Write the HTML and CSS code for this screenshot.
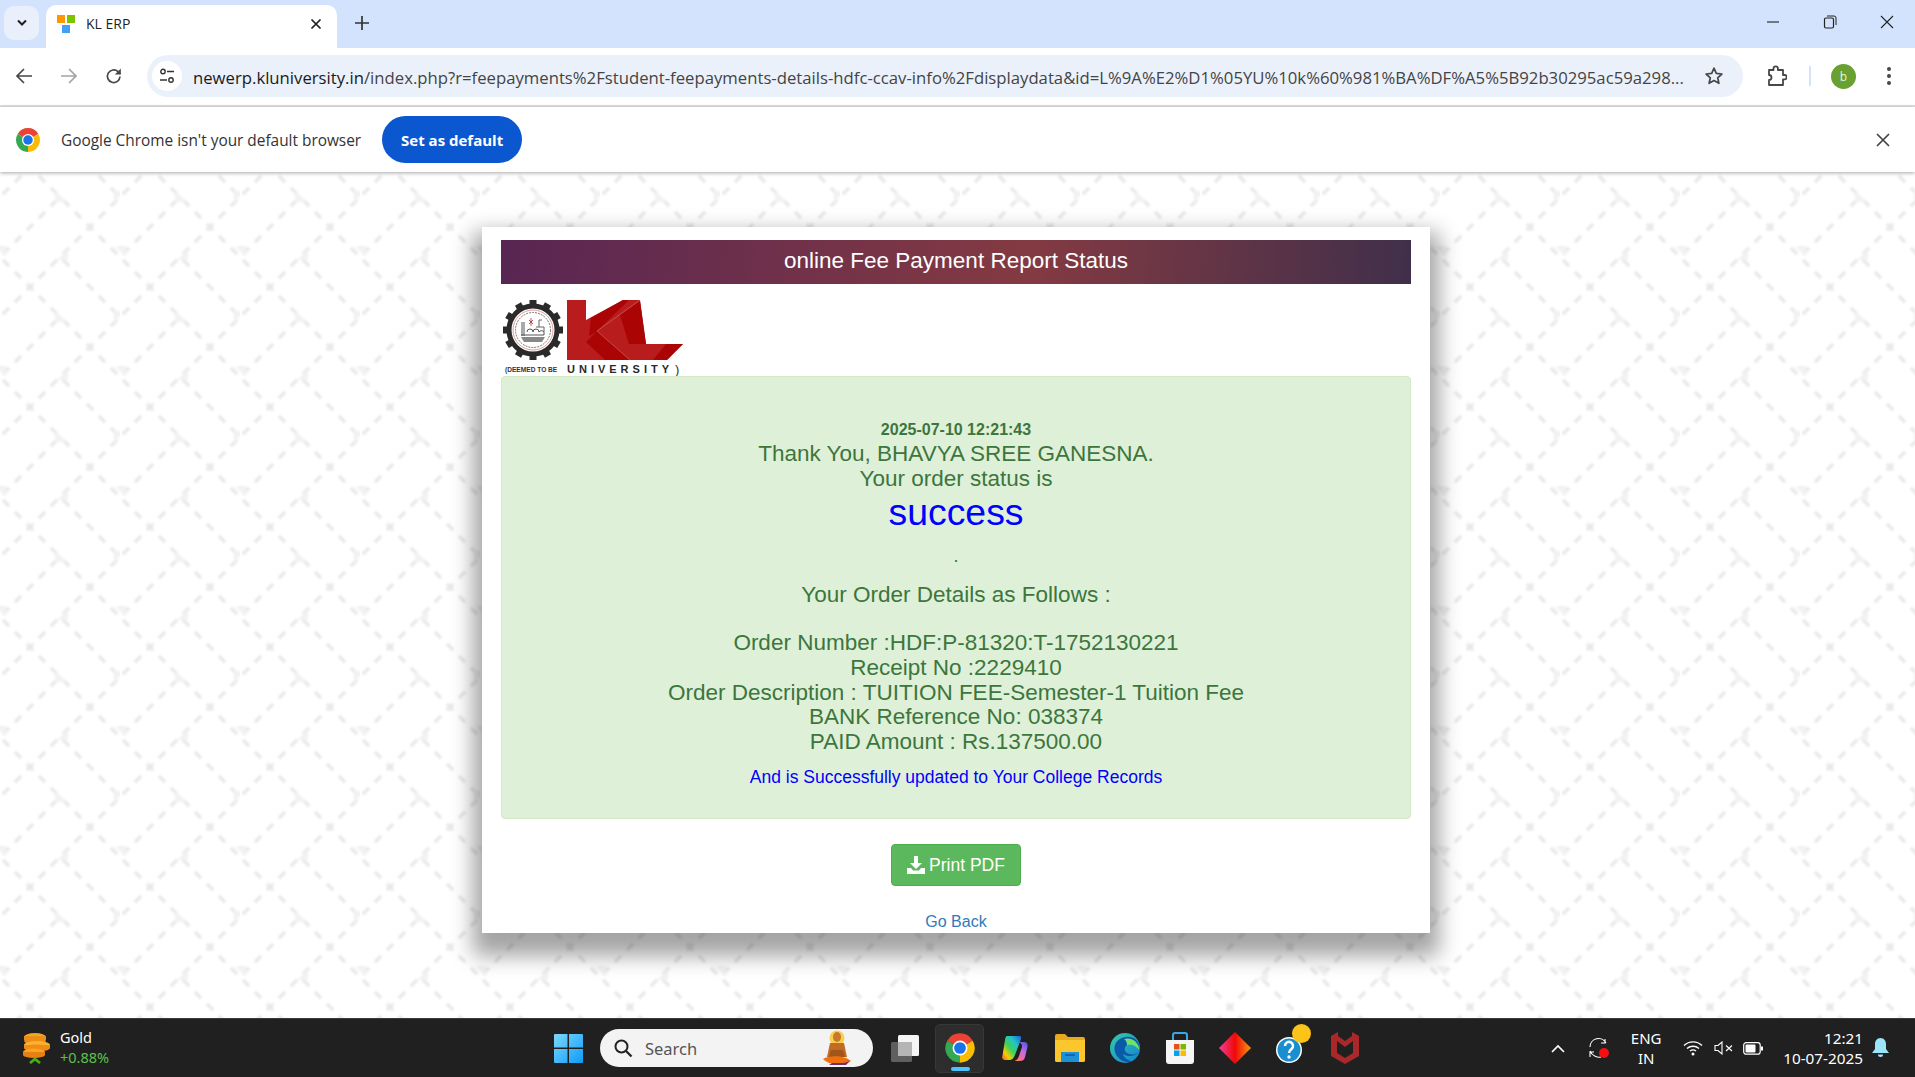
FILE: index.html
```html
<!DOCTYPE html>
<html lang="en">
<head>
<meta charset="utf-8">
<title>KL ERP</title>
<link rel="stylesheet" href="styles.css">
</head>
<body>
<svg class="defs" width="0" height="0" aria-hidden="true">
  <symbol id="chrome" viewBox="0 0 24 24">
    <path fill="#ea4335" d="M2.47 6.5A11 11 0 0 1 21.53 6.5L12 12Z"/>
    <path fill="#fbbc04" d="M21.53 6.5A11 11 0 0 1 12 23L12 12Z"/>
    <path fill="#34a853" d="M12 23A11 11 0 0 1 2.47 6.5L12 12Z"/>
    <circle cx="12" cy="12" r="5.6" fill="#fff"/>
    <circle cx="12" cy="12" r="4.4" fill="#1a73e8"/>
  </symbol>
</svg>

<header class="tabbar">
  <button class="tabs-menu"><svg width="12" height="8" viewBox="0 0 12 8"><path d="M2 1.5l4 4 4-4" fill="none" stroke="#1f1f1f" stroke-width="2"/></svg></button>
  <div class="tab">
    <svg class="favicon" width="18" height="18" viewBox="0 0 18 18"><rect x="0" y="0" width="8" height="8" fill="#ff9800"/><rect x="10" y="0" width="8" height="8" fill="#7cc400"/><rect x="5" y="10" width="8" height="8" fill="#42a0f5"/></svg>
    <span class="tab-title">KL ERP</span>
    <svg class="tab-close" width="12" height="12" viewBox="0 0 12 12"><path d="M1.5 1.5l9 9M10.5 1.5l-9 9" stroke="#1f1f1f" stroke-width="1.7"/></svg>
  </div>
  <svg class="new-tab" width="14" height="14" viewBox="0 0 14 14"><path d="M7 0v14M0 7h14" stroke="#333" stroke-width="1.7"/></svg>
  <div class="window-controls">
    <svg width="14" height="14" viewBox="0 0 14 14"><path d="M1 7h12" stroke="#222" stroke-width="1.1"/></svg>
    <svg width="14" height="14" viewBox="0 0 14 14"><rect x="1.5" y="3" width="9" height="10" rx="1.5" fill="none" stroke="#222" stroke-width="1.2"/><path d="M4 1h7a2 2 0 0 1 2 2v7" fill="none" stroke="#222" stroke-width="1"/></svg>
    <svg width="14" height="14" viewBox="0 0 14 14"><path d="M1 1l12 12M13 1L1 13" stroke="#222" stroke-width="1.1"/></svg>
  </div>
</header>

<nav class="toolbar">
  <div class="nav-icons">
    <svg width="18" height="18" viewBox="0 0 18 18"><path d="M17 9H2M9 2L2 9l7 7" fill="none" stroke="#474747" stroke-width="1.7"/></svg>
    <svg width="18" height="18" viewBox="0 0 18 18"><path d="M1 9h15M9 2l7 7-7 7" fill="none" stroke="#a3a3a3" stroke-width="1.7"/></svg>
    <svg width="18" height="18" viewBox="0 0 18 18"><path d="M15 9.500A6.300 6.300 0 1 1 13 4.600L15.500 7" fill="none" stroke="#474747" stroke-width="1.7"/><path d="M15.800 1.500v6h-6z" fill="#474747"/></svg>
  </div>
  <div class="omnibox">
    <span class="tune"><svg width="16" height="16" viewBox="0 0 16 16"><circle cx="4" cy="3.500" r="2.200" fill="none" stroke="#333" stroke-width="1.400"/><path d="M8 3.500h7M1 12h7" stroke="#333" stroke-width="1.400"/><circle cx="12" cy="12" r="2.200" fill="none" stroke="#333" stroke-width="1.400"/></svg></span>
    <span class="url"><span class="domain">newerp.kluniversity.in</span>/index.php?r=feepayments%2Fstudent-feepayments-details-hdfc-ccav-info%2Fdisplaydata&amp;id=L%9A%E2%D1%05YU%10k%60%981%BA%DF%A5%5B92b30295ac59a298...</span>
    <svg class="star" width="20" height="20" viewBox="0 0 20 20"><path d="M10 2.200l2.300 5.200 5.600.6-4.200 3.800 1.200 5.500L10 14.500l-4.900 2.800 1.200-5.500L2.100 8l5.600-.6z" fill="none" stroke="#474747" stroke-width="1.700" stroke-linejoin="round"/></svg>
  </div>
  <div class="tool-icons">
    <svg width="20" height="22" viewBox="0 0 20 22"><path d="M2 5h4.500V3.500a2.200 2.200 0 0 1 4.400 0V5H16v5h1.500a2.200 2.200 0 0 1 0 4.400H16V20H2v-5a2.300 2.300 0 0 0 0-5z" fill="none" stroke="#474747" stroke-width="1.800" stroke-linejoin="round"/></svg>
    <span class="divider"></span>
    <span class="avatar">b</span>
    <svg width="6" height="20" viewBox="0 0 6 20"><circle cx="3" cy="3" r="2" fill="#474747"/><circle cx="3" cy="10" r="2" fill="#474747"/><circle cx="3" cy="17" r="2" fill="#474747"/></svg>
  </div>
</nav>

<section class="infobar">
  <svg class="info-logo" width="26" height="26"><use href="#chrome"/></svg>
  <span class="info-text">Google Chrome isn't your default browser</span>
  <button class="default-btn">Set as default</button>
  <svg class="info-close" width="14" height="14" viewBox="0 0 14 14"><path d="M1 1l12 12M13 1L1 13" stroke="#444" stroke-width="1.700"/></svg>
</section>

<main class="page">
  <article class="card">
    <h1 class="banner">online Fee Payment Report Status</h1>
    <svg class="logo" width="182" height="78" viewBox="0 0 182 78">
      <g transform="translate(32 32)">
        <circle r="24" fill="none" stroke="#2a2a2a" stroke-width="5"/>
        <g fill="#2a2a2a">
          <rect x="-3.500" y="-30" width="7" height="6"/><rect x="-3.500" y="-30" width="7" height="6" transform="rotate(30)"/><rect x="-3.500" y="-30" width="7" height="6" transform="rotate(60)"/><rect x="-3.500" y="-30" width="7" height="6" transform="rotate(90)"/><rect x="-3.500" y="-30" width="7" height="6" transform="rotate(120)"/><rect x="-3.500" y="-30" width="7" height="6" transform="rotate(150)"/><rect x="-3.500" y="-30" width="7" height="6" transform="rotate(180)"/><rect x="-3.500" y="-30" width="7" height="6" transform="rotate(210)"/><rect x="-3.500" y="-30" width="7" height="6" transform="rotate(240)"/><rect x="-3.500" y="-30" width="7" height="6" transform="rotate(270)"/><rect x="-3.500" y="-30" width="7" height="6" transform="rotate(300)"/><rect x="-3.500" y="-30" width="7" height="6" transform="rotate(330)"/>
        </g>
        <circle r="20" fill="none" stroke="#e3a0a0" stroke-width="1"/>
        <circle r="17.500" fill="none" stroke="#666" stroke-width=".9" stroke-dasharray="2 1"/>
        <path d="M-11 -8v14M-9 -8v14M-6 2a3 3 0 0 1 6 0M0 2a3 3 0 0 1 6 0M6 2a3 3 0 0 1 5 0v3H-12" fill="none" stroke="#555" stroke-width="1"/>
        <path d="M-12 7h24l-3 5h-18z" fill="#888"/>
        <path d="M-4 -10l4 4M0 -10l-4 4M-2 -12v8" stroke="#a33" stroke-width=".8"/>
        <path d="M3 -3h8v5M6 -3v-7h3" fill="none" stroke="#666" stroke-width="1"/>
      </g>
      <path fill="#b81c1c" d="M66 2H85V22L122 2H139L145 46H182L166 62H66Z"/>
      <path fill="#ab0404" d="M90 20L122 2H128L96 33L88 38Z"/>
      <path fill="#ab0404" d="M96 33L129 62H104L85 44Z"/>
      <path fill="#ab0404" d="M119 17L139 3L145 46H128Z"/>
      <path fill="#ab0404" d="M165 46H182L166 62H152Z"/>
      <path d="M129 62L96 33L139 2" fill="none" stroke="#e0a0a0" stroke-width=".4"/>
      <text class="logo-deemed" x="4" y="74">(DEEMED TO BE</text>
      <text class="logo-uni" x="66" y="75">UNIVERSITY</text>
      <text class="logo-paren" x="174" y="76">)</text>
    </svg>
    <div class="alert">
      <div class="date">2025-07-10 12:21:43</div>
      <div>Thank You, BHAVYA SREE GANESNA.</div>
      <div>Your order status is</div>
      <div class="status">success</div>
      <div class="dot">.</div>
      <div class="follows">Your Order Details as Follows :</div>
      <div class="details">
        <div>Order Number :HDF:P-81320:T-1752130221</div>
        <div>Receipt No :2229410</div>
        <div>Order Description : TUITION FEE-Semester-1 Tuition Fee</div>
        <div>BANK Reference No: 038374</div>
        <div>PAID Amount : Rs.137500.00</div>
      </div>
      <div class="updated">And is Successfully updated to Your College Records</div>
    </div>
    <div class="actions">
      <button class="print-btn"><svg width="18" height="18" viewBox="0 0 18 18"><path d="M7 0h4v7h4l-6 6-6-6h4z" fill="#fff"/><path d="M0 12h4l2 2.500h6l2-2.500h4v6H0z" fill="#fff"/></svg>Print PDF</button>
      <a class="back" href="#">Go Back</a>
    </div>
  </article>
</main>

<footer class="taskbar">
  <div class="widget">
    <svg width="30" height="32" viewBox="0 0 30 32">
      <ellipse cx="14" cy="5" rx="11" ry="4" fill="#f5a623"/><rect x="3" y="4" width="22" height="4" fill="#e8901a"/><ellipse cx="14" cy="9" rx="11" ry="3.500" fill="#f08c13"/>
      <ellipse cx="16" cy="13" rx="13" ry="4" fill="#f9b233"/><rect x="3" y="13" width="26" height="3" fill="#e8901a"/><ellipse cx="16" cy="16" rx="13" ry="3.500" fill="#f08c13"/>
      <ellipse cx="13" cy="20" rx="11" ry="3.500" fill="#f5a623"/><rect x="2" y="20" width="22" height="3" fill="#e8801a"/><ellipse cx="13" cy="23" rx="11" ry="3" fill="#e87f12"/>
      <path d="M9 31l5-4 5 4" fill="none" stroke="#4caf10" stroke-width="2.800"/>
    </svg>
    <div class="widget-text"><span>Gold</span><span class="gain">+0.88%</span></div>
  </div>
  <div class="apps">
    <svg class="start" width="29" height="29" viewBox="0 0 29 29"><defs><linearGradient id="win" x1="0" y1="0" x2="1" y2="1"><stop offset="0" stop-color="#7dd8fd"/><stop offset="1" stop-color="#0d9bf5"/></linearGradient></defs><path fill="url(#win)" d="M0 1a1 1 0 0 1 1-1h12.500v13.500H0zM15 0h13a1 1 0 0 1 1 1v12.500H15zM0 15h13.500v14H1a1 1 0 0 1-1-1zM15 15h14v13a1 1 0 0 1-1 1H15z"/></svg>
    <div class="search">
      <svg width="20" height="20" viewBox="0 0 20 20"><circle cx="8.500" cy="8.500" r="6" fill="none" stroke="#222" stroke-width="2"/><path d="M13 13l5.500 5.500" stroke="#222" stroke-width="2.300"/></svg>
      <span>Search</span>
      <svg class="buddha" width="30" height="36" viewBox="0 0 30 36"><circle cx="15" cy="8" r="7.500" fill="#f7cf4f"/><ellipse cx="15" cy="7" rx="4" ry="5" fill="#c9772b"/><path d="M8 13h14l3 14H5z" fill="#c46a22"/><path d="M9 20h12l2 7H7z" fill="#a0551c"/><path d="M1 29c6-4 22-4 28 2-6 4-22 5-28-2z" fill="#f0700d"/><path d="M10 33h12l6-2-4 4H7z" fill="#6a2f6c"/></svg>
    </div>
    <div class="app-icons">
      <span class="app"><svg width="30" height="30" viewBox="0 0 30 30"><rect x="1" y="9" width="21" height="20" rx="1.500" fill="#5f5f5f"/><rect x="8" y="2" width="21" height="21" rx="1.500" fill="#f5f5f5"/><rect x="8" y="9" width="14" height="14" fill="#b5b5b5"/></svg></span>
      <span class="app active"><svg width="32" height="32"><use href="#chrome"/></svg></span>
      <span class="app"><svg width="26" height="27" viewBox="0 0 26 27"><defs><linearGradient id="cop1" x1="1" y1="0" x2="0" y2="1"><stop offset="0" stop-color="#1e5ce0"/><stop offset=".3" stop-color="#22c4c4"/><stop offset=".55" stop-color="#3fd05a"/><stop offset=".78" stop-color="#f5d000"/><stop offset="1" stop-color="#f0553a"/></linearGradient><linearGradient id="cop2" x1=".8" y1="0" x2=".2" y2="1"><stop offset="0" stop-color="#5a5ae8"/><stop offset=".45" stop-color="#c86be0"/><stop offset=".75" stop-color="#f06aa0"/><stop offset="1" stop-color="#f58a3b"/></linearGradient></defs><path fill="url(#cop2)" d="M16 7H22c3 0 4 2 3.500 5L23 22c-.7 3-2.500 4-5 4H11c3 0 5-2 6-5l3-9c.5-2-1.500-5-4-5z"/><path fill="url(#cop1)" d="M5 1H17c2 0 2.500 1 2 3L13 20c-1 3-3 5-6 5H3c-2.500 0-3.500-2-2.500-4.500L3 5c.5-3 1-4 2-4z"/></svg></span>
      <span class="app"><svg width="30" height="28" viewBox="0 0 30 28"><path d="M0 2a2 2 0 0 1 2-2h8l3 3h15a2 2 0 0 1 2 2v21a2 2 0 0 1-2 2H2a2 2 0 0 1-2-2z" fill="#e6a91f"/><path d="M0 6h30v20a2 2 0 0 1-2 2H2a2 2 0 0 1-2-2z" fill="#fcc72c"/><path d="M6 18h18v10H6z" fill="#1e90d8"/><path d="M10 21h10" stroke="#0a5ba3" stroke-width="1.500"/></svg></span>
      <span class="app"><svg width="30" height="30" viewBox="0 0 30 30"><defs><linearGradient id="edge" x1="0" y1="0" x2="1" y2="1"><stop offset="0" stop-color="#36c9a8"/><stop offset="1" stop-color="#1283d4"/></linearGradient></defs><circle cx="15" cy="15" r="15" fill="url(#edge)"/><path d="M29 19c-3 3-9 3-12 1-3-2-3-6 0-8 3-2 9-1 12 3 1-7-6-12-13-11C7 5 3 12 5 19c2 7 10 12 17 9-4-.5-8-3-9-7 4 3 12 3 16-2z" fill="#0b5aa8"/><path d="M17 12c4-1 9 0 12 5 0 0 0-2-.5-4C26 7 20 4 14 6c2 1 3 4 3 6z" fill="#6fe26a"/></svg></span>
      <span class="app"><svg width="30" height="32" viewBox="0 0 30 32"><path d="M8 8V3a2 2 0 0 1 2-2h10a2 2 0 0 1 2 2v5" fill="none" stroke="#36a8e8" stroke-width="2"/><path d="M1 8h28v21a3 3 0 0 1-3 3H4a3 3 0 0 1-3-3z" fill="#f5f5f5"/><rect x="9" y="12" width="5.500" height="5.500" fill="#e8501e"/><rect x="15.500" y="12" width="5.500" height="5.500" fill="#7ab800"/><rect x="9" y="18.500" width="5.500" height="5.500" fill="#00a2ed"/><rect x="15.500" y="18.500" width="5.500" height="5.500" fill="#ffb900"/></svg></span>
      <span class="app"><svg width="32" height="32" viewBox="0 0 32 32"><defs><linearGradient id="dia" x1="0" y1="0" x2="1" y2="0"><stop offset="0" stop-color="#f0409a"/><stop offset=".5" stop-color="#f00808"/><stop offset="1" stop-color="#f79a10"/></linearGradient></defs><path d="M16 0l16 16-16 16L0 16z" fill="url(#dia)"/></svg></span>
      <span class="app help"><svg width="30" height="32" viewBox="0 0 30 32"><circle cx="14" cy="18" r="13" fill="#fff"/><circle cx="14" cy="18" r="11.500" fill="#1a8fd0"/><path d="M10 14a4 4 0 1 1 6.500 3c-1.500 1.200-2.500 2-2.500 4" fill="none" stroke="#fff" stroke-width="2.500"/><circle cx="14" cy="25" r="1.700" fill="#fff"/></svg><i class="badge"></i></span>
      <span class="app"><svg width="28" height="32" viewBox="0 0 28 32"><path d="M0 4l7-4v4l7 5 7-5V0l7 4v20l-14 8-14-8z" fill="#a9282a"/><path d="M6 9v12l8 5 8-5V9l-8 6z" fill="#202020"/></svg></span>
    </div>
  </div>
  <div class="tray">
    <svg width="14" height="9" viewBox="0 0 14 9"><path d="M1 8l6-6 6 6" fill="none" stroke="#fff" stroke-width="1.700"/></svg>
    <svg class="sync" width="22" height="24" viewBox="0 0 22 24"><path d="M2 11a8.500 8.500 0 0 1 16-4M17 3v4h-4M2 15c2 5 8 7 11 6M2 21v-5h4" fill="none" stroke="#fff" stroke-width="1.100"/><circle cx="16" cy="17" r="5" fill="#f50f0f"/></svg>
    <div class="lang"><span>ENG</span><span>IN</span></div>
    <svg width="20" height="16" viewBox="0 0 20 16"><path d="M1 5.500a13 13 0 0 1 18 0M4 8.500a9 9 0 0 1 12 0M7 11a5 5 0 0 1 6 0" fill="none" stroke="#fff" stroke-width="1.400"/><circle cx="10" cy="14" r="1.500" fill="#fff"/></svg>
    <svg class="sound" width="20" height="14" viewBox="0 0 20 14"><path d="M1 4.500h3l4-3.500v12l-4-3.500H1z" fill="none" stroke="#fff" stroke-width="1.100"/><path d="M12 4.500l6 5.500M18 4.500l-6 5.500" stroke="#fff" stroke-width="1.100"/></svg>
    <svg width="20" height="13" viewBox="0 0 20 13"><rect x=".7" y=".7" width="16.500" height="11.500" rx="2.500" fill="none" stroke="#fff" stroke-width="1.200"/><rect x="2.500" y="2.500" width="10" height="8" rx="1" fill="#fff"/><rect x="18" y="4.500" width="2" height="4" fill="#fff"/></svg>
    <div class="clock"><span>12:21</span><span>10-07-2025</span></div>
    <svg class="bell" width="17" height="20" viewBox="0 0 17 20"><path d="M8.500 0c3.500 0 5.500 3 5.500 6v5l3 4H0l3-4V6c0-3 2-6 5.500-6z" fill="#9be4fa"/><path d="M6 16.500h5a2.500 2.500 0 0 1-5 0z" fill="#9be4fa"/></svg>
  </div>
</footer>
</body>
</html>
```

FILE: styles.css
```css
* { box-sizing: border-box; }
html, body { margin: 0; height: 100%; }
body {
  display: flex;
  flex-direction: column;
  height: 100vh;
  overflow: hidden;
  font-family: "Liberation Sans", Arial, sans-serif;
  background: #fff;
}
.defs { display: block; height: 0; }
button { font: inherit; border: 0; padding: 0; }

/* browser tab strip */
.tabbar {
  flex: none;
  height: 48px;
  display: flex;
  align-items: flex-end;
  background: #d3e3fd;
  font-family: "Open Sans", "Noto Sans", sans-serif;
}
.tabs-menu {
  width: 35px;
  height: 34px;
  margin: 0 7px 8px 4px;
  border-radius: 10px;
  background: #e9effb;
  display: flex;
  align-items: center;
  justify-content: center;
}
.tab {
  width: 291px;
  height: 43px;
  background: #fff;
  border-radius: 10px 10px 0 0;
  display: flex;
  align-items: center;
  padding: 0 15px 5px 11px;
  color: #1f1f1f;
  font-size: 14px;
}
.favicon { flex: none; }
.tab-title { margin: 0 0 2px 11px; flex: 1; }
.new-tab { margin: 0 0 18px 18px; }
.window-controls {
  margin: 0 21px 19px auto;
  display: flex;
  gap: 43px;
}

/* address bar */
.toolbar {
  flex: none;
  height: 59px;
  background: #fff;
  border-bottom: 2px solid #e1e1e1;
  display: flex;
  align-items: center;
  padding-bottom: 1px;
  font-family: "Open Sans", "Noto Sans", sans-serif;
}
.nav-icons {
  display: flex;
  gap: 27px;
  margin-left: 15px;
  width: 132px;
}
.omnibox {
  width: 1596px;
  height: 42px;
  border-radius: 21px;
  background: #ebf1fb;
  display: flex;
  align-items: center;
  padding: 0 19px 0 5px;
}
.tune {
  width: 30px;
  height: 30px;
  border-radius: 50%;
  background: #fff;
  flex: none;
  display: flex;
  align-items: center;
  justify-content: center;
}
.url {
  margin-left: 11px;
  padding-top: 2px;
  flex: 1;
  font-size: 16.72px;
  color: #444;
  white-space: nowrap;
  overflow: hidden;
}
.domain { color: #1a1a1a; }
.star { flex: none; }
.tool-icons {
  display: flex;
  align-items: center;
  margin-left: 24px;
}
.divider { width: 2px; height: 20px; background: #d3e3fd; margin: 0 20px 0 22px; }
.avatar {
  width: 25px;
  height: 25px;
  border-radius: 50%;
  background: #68a032;
  color: #e8f5d8;
  font-size: 12px;
  display: flex;
  align-items: center;
  justify-content: center;
  margin-right: 30px;
}

/* infobar */
.infobar {
  flex: none;
  height: 65px;
  display: flex;
  align-items: center;
  padding: 0 25px 0 15px;
  background: #fff;
  box-shadow: 0 1px 4px rgba(0,0,0,.35);
  position: relative;
  font-family: "Open Sans", "Noto Sans", sans-serif;
}
.info-logo { flex: none; }
.info-text { margin: 2px 0 0 20px; font-size: 15.4px; color: #333; }
.default-btn {
  margin-left: 21px;
  width: 140px;
  height: 47px;
  border-radius: 24px;
  background: #0b57d0;
  color: #fff;
  font-weight: 700;
  font-size: 15px;
  font-family: inherit;
}
.info-close { margin-left: auto; }

/* page */
.page {
  flex: 1;
  min-height: 0;
  overflow: hidden;
  padding: 55px 0 0 482px;
  background-color: #fff;
  background-position: 0 25px;
  background-image: url("data:image/svg+xml,%3Csvg xmlns='http://www.w3.org/2000/svg' width='120' height='120'%3E%3Cdefs%3E%3Cfilter id='b' x='-5%25' y='-5%25' width='110%25' height='110%25'%3E%3CfeGaussianBlur stdDeviation='1'/%3E%3C/filter%3E%3Cg id='g'%3E%3Cpath d='M60 0L120 60M120 0L60 60M0 60L60 120M60 60L0 120M60 60L120 120M60 0L0 60' stroke='%23e9e9e9' stroke-width='3.5' stroke-dasharray='9 7.97' stroke-dashoffset='-4' fill='none'/%3E%3Cpath d='M55-6L55 5L67 5zM125-6L114-6L114 5zM115 49L126 49L126 60zM68 52L68 63L57 63z' fill='%23f2f2f2'/%3E%3C/g%3E%3C/defs%3E%3Cg filter='url(%23b)'%3E%3Cuse href='%23g'/%3E%3Cuse href='%23g' y='120'/%3E%3Cuse href='%23g' y='-120'/%3E%3Cuse href='%23g' x='120'/%3E%3Cuse href='%23g' x='-120'/%3E%3C/g%3E%3C/svg%3E");
}
.card {
  width: 948px;
  height: 706px;
  padding: 13px 19px 0;
  background: #fff;
  box-shadow: 0 14px 20px 9px rgba(0,0,0,.36);
  overflow: hidden;
}
.banner {
  margin: 0;
  height: 44px;
  background: linear-gradient(95deg, #582653 0%, #843a42 58%, #402f4a 100%);
  color: #fff;
  font-weight: 400;
  font-size: 22.5px;
  line-height: 42px;
  text-align: center;
}
.logo { display: block; margin-top: 14px; }
.logo-deemed { font: 700 6.6px "Liberation Sans", sans-serif; fill: #333; }
.logo-uni { font: 400 11px "Liberation Sans", sans-serif; font-weight: 700; letter-spacing: 4px; fill: #2a2a2a; }
.logo-paren { font: 400 13px "Liberation Sans", sans-serif; fill: #333; }
.alert {
  height: 443px;
  padding-top: 41px;
  background: #dff0d8;
  border: 1px solid #d6e9c6;
  border-radius: 4px;
  color: #3c763d;
  text-align: center;
  font-size: 22.5px;
  line-height: 24.6px;
}
.date { font-size: 16px; font-weight: 700; line-height: 24px; }
.status { font-size: 37.4px; color: #00f; line-height: 46px; margin-top: -2px; }
.dot { font-size: 18px; margin-top: 9px; }
.follows { margin-top: 14px; }
.details { margin-top: 24px; }
.updated { font-size: 17.5px; color: #00f; margin-top: 11px; }
.actions {
  display: flex;
  flex-direction: column;
  align-items: center;
  padding-top: 25px;
}
.print-btn {
  width: 130px;
  height: 42px;
  background: #5cb85c;
  border: 1px solid #4cae4c;
  border-radius: 4px;
  color: #fff;
  font-size: 17.5px;
  display: flex;
  align-items: center;
  justify-content: center;
  gap: 4px;
}
.back {
  margin-top: 27px;
  font-size: 16px;
  color: #337ab7;
  text-decoration: none;
}

/* taskbar */
.taskbar {
  flex: none;
  height: 59px;
  background: #202020;
  border-top: 1px solid #3a3a3a;
  display: flex;
  align-items: center;
  color: #fff;
  font-family: "Noto Sans", "Open Sans", sans-serif;
  font-size: 14px;
}
.widget {
  width: 554px;
  padding-left: 21px;
  display: flex;
  align-items: center;
  gap: 9px;
}
.widget-text { display: flex; flex-direction: column; line-height: 20px; font-size: 14.5px; margin-top: -2px; }
.gain { color: #5cc14a; }
.apps { display: flex; align-items: center; }
.start { flex: none; }
.search {
  margin-left: 17px;
  width: 273px;
  height: 38px;
  border-radius: 19px;
  background: #f3f3f3;
  display: flex;
  align-items: center;
  padding: 0 21px 0 13px;
  color: #555;
  font-size: 16.5px;
}
.search span { margin-left: 12px; flex: 1; }
.app-icons { display: flex; margin-left: 7px; }
.app {
  position: relative;
  width: 49px;
  height: 49px;
  margin-right: 6px;
  border-radius: 5px;
  display: flex;
  align-items: center;
  justify-content: center;
}
.active { background: #2d2d2d; border: 1px solid #383838; }
.active::after {
  content: "";
  position: absolute;
  left: 15px;
  bottom: 1px;
  width: 19px;
  height: 4px;
  border-radius: 2px;
  background: #4cc2ff;
}
.badge {
  position: absolute;
  top: 0;
  right: 3px;
  width: 19px;
  height: 19px;
  border-radius: 50%;
  background: #fcc419;
}
.tray {
  margin-left: auto;
  display: flex;
  align-items: center;
  padding-right: 26px;
  font-size: 15px;
}
.lang {
  width: 40px;
  margin: 0 17px 0 16px;
  display: flex;
  flex-direction: column;
  align-items: center;
  line-height: 20px;
}
.tray svg + svg { margin-left: 9px; }
.tray .sync { margin-left: 23px; }
.tray .sound { margin-left: 11px; }
.clock {
  margin-left: 20px;
  font-size: 15.3px;
  display: flex;
  flex-direction: column;
  align-items: flex-end;
  line-height: 20px;
}
.tray .bell { margin-left: 9px; }
```
